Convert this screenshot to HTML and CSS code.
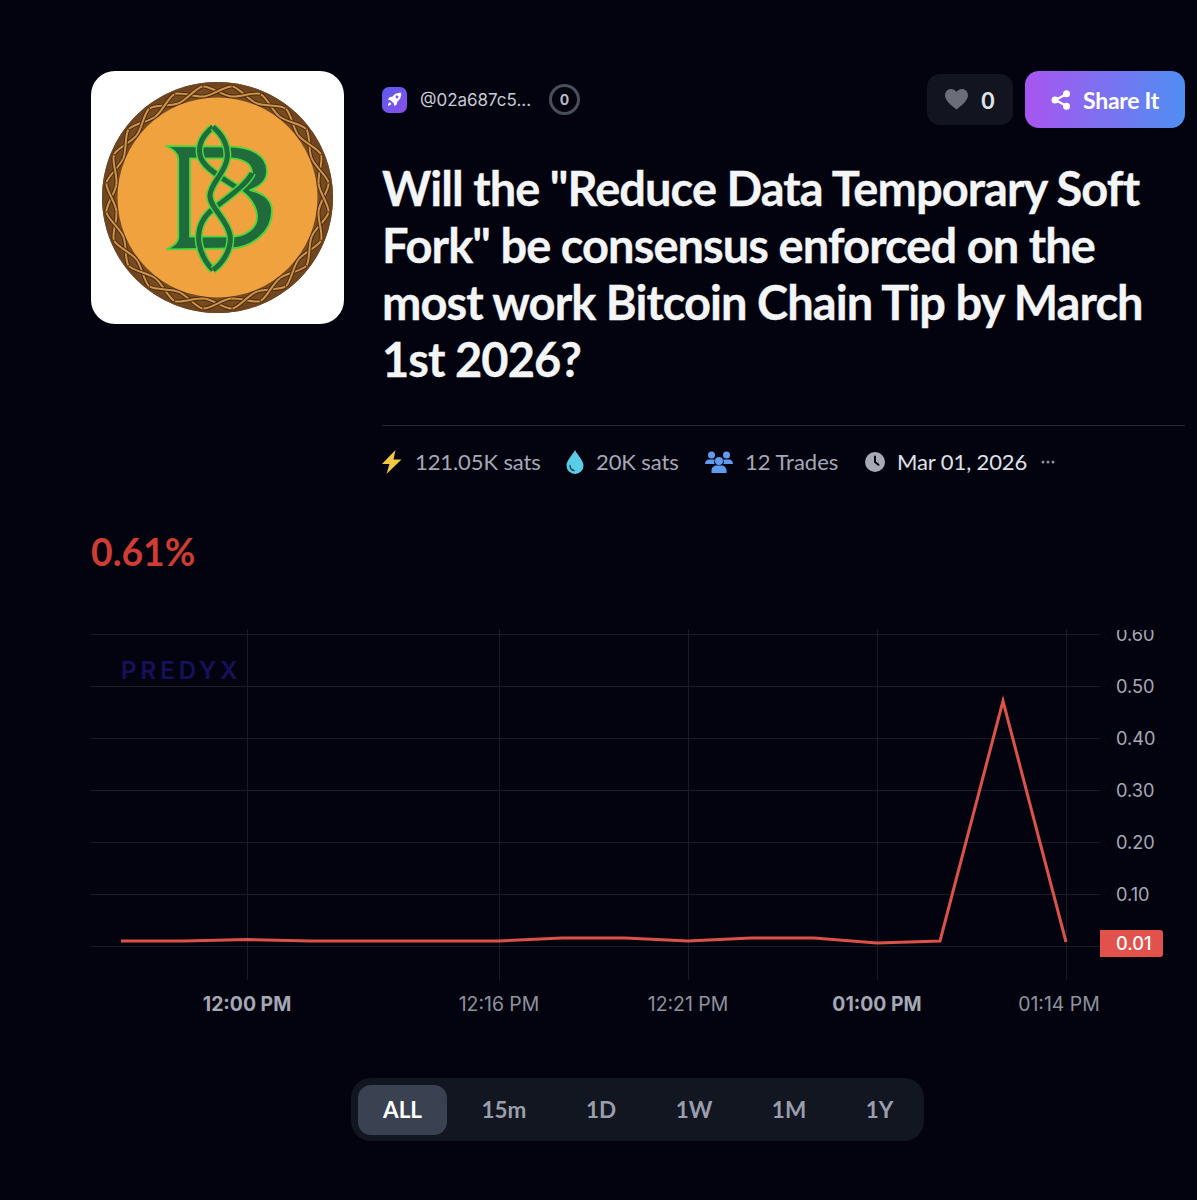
FILE: index.html
```html
<!DOCTYPE html>
<html lang="en">
<head>
<meta charset="utf-8">
<title>Market</title>
<link rel="stylesheet" href="styles.css">
</head>
<body>
<main class="page">
  <section class="header">
    <div class="logo">
      <svg viewBox="0 0 253 253" width="253" height="253">
        <defs>
          <g id="braid">
            <path class="braid-o" d="M112.500 15.400C120 15.400 133 25.400 140.500 25.400"/>
            <path class="braid-i" d="M112.500 15.400C120 15.400 133 25.400 140.500 25.400"/>
            <path class="braid-o" d="M112.500 25.400C120 25.400 133 15.400 140.500 15.400"/>
            <path class="braid-i" d="M112.500 25.400C120 25.400 133 15.400 140.500 15.400"/>
          </g>
        </defs>
        <circle cx="126.500" cy="126.500" r="107" fill="none" stroke="#774a1f" stroke-width="17"/>
        <circle cx="126.500" cy="126.500" r="113" fill="none" stroke="#6e4520" stroke-width="5" stroke-dasharray="13 2" stroke-linecap="round"/>
        <use href="#braid"/>
        <use href="#braid" transform="rotate(15 126.500 126.500)"/>
        <use href="#braid" transform="rotate(30 126.500 126.500)"/>
        <use href="#braid" transform="rotate(45 126.500 126.500)"/>
        <use href="#braid" transform="rotate(60 126.500 126.500)"/>
        <use href="#braid" transform="rotate(75 126.500 126.500)"/>
        <use href="#braid" transform="rotate(90 126.500 126.500)"/>
        <use href="#braid" transform="rotate(105 126.500 126.500)"/>
        <use href="#braid" transform="rotate(120 126.500 126.500)"/>
        <use href="#braid" transform="rotate(135 126.500 126.500)"/>
        <use href="#braid" transform="rotate(150 126.500 126.500)"/>
        <use href="#braid" transform="rotate(165 126.500 126.500)"/>
        <use href="#braid" transform="rotate(180 126.500 126.500)"/>
        <use href="#braid" transform="rotate(195 126.500 126.500)"/>
        <use href="#braid" transform="rotate(210 126.500 126.500)"/>
        <use href="#braid" transform="rotate(225 126.500 126.500)"/>
        <use href="#braid" transform="rotate(240 126.500 126.500)"/>
        <use href="#braid" transform="rotate(255 126.500 126.500)"/>
        <use href="#braid" transform="rotate(270 126.500 126.500)"/>
        <use href="#braid" transform="rotate(285 126.500 126.500)"/>
        <use href="#braid" transform="rotate(300 126.500 126.500)"/>
        <use href="#braid" transform="rotate(315 126.500 126.500)"/>
        <use href="#braid" transform="rotate(330 126.500 126.500)"/>
        <use href="#braid" transform="rotate(345 126.500 126.500)"/>
        <circle cx="126.500" cy="126.500" r="100" fill="#f0a23f"/>
        <path class="b-shape" d="M75 75 L139 75.700 C160 76 176 84 176 100 C176 110 168 116 159 119 C172 122 181 128 181 140 C181 162 160 177 139 177.500 L75.700 178.300 C82 175 87.300 172 87.300 166 L87.300 88 C87.300 82 82 78 75 75 Z M99 87.300 L141 87.300 C155 88 162 95 161 104 C160 110 155 114 149 119 C158 125 166 135 166 146 C166 157 155 165.700 139 165.700 L99 165.700 Z"/>
        <path class="knot-o" d="M122 56 C112 64 107 74 109 84 C111 96 130 106 149 119"/>
        <path class="knot-i" d="M122 56 C112 64 107 74 109 84 C111 96 130 106 149 119"/>
        <path class="knot-o" d="M161 102 C158 110 146 120 122 138 C112 146 106 156 108 172 C110 184 116 193 122 199"/>
        <path class="knot-i" d="M161 102 C158 110 146 120 122 138 C112 146 106 156 108 172 C110 184 116 193 122 199"/>
        <path class="knot-o" d="M122 56 C132 64 138 76 136 88 C134 102 120 112 119 124 C118 136 136 148 139 164 C141 178 132 192 122 199"/>
        <path class="knot-i" d="M122 56 C132 64 138 76 136 88 C134 102 120 112 119 124 C118 136 136 148 139 164 C141 178 132 192 122 199"/>
      </svg>
    </div>
    <div class="info">
      <div class="top-row">
        <div class="creator">
          <span class="avatar">
            <svg viewBox="0 0 24 24" width="17" height="17"><path fill="#fff" d="M21.500 2.500c-5.500-.4-9.700 1.600-12.600 5.600L5.400 8.600 2.500 12l3.900.9 4.700 4.700.9 3.900 3.400-2.900.5-3.500c4-2.900 6-7.100 5.600-12.600zM15.500 6.500a2 2 0 1 1 0 4 2 2 0 0 1 0-4zM5.500 16c-1.500.5-2.500 2-2.700 4.700 2.700-.2 4.200-1.200 4.700-2.700z"/></svg>
          </span>
          <span class="handle">@02a687c5...</span>
          <span class="level">0</span>
        </div>
        <div class="actions">
          <button class="like">
            <svg viewBox="0 0 24 22" width="23" height="21"><path fill="#6b6e78" d="M12 21.500C5 15.800 0 11.600 0 6.500 0 2.800 2.800 0 6.300 0 8.500 0 10.700 1.100 12 3c1.300-1.900 3.500-3 5.700-3C21.200 0 24 2.800 24 6.500c0 5.100-5 9.300-12 15z"/></svg>
            <span>0</span>
          </button>
          <button class="share">
            <svg viewBox="0 0 20 20" width="20" height="20"><path fill="none" stroke="#fff" stroke-width="2.200" d="M15.500 4 4.500 10l11 6"/><circle cx="15.500" cy="3.800" r="3.500" fill="#fff"/><circle cx="15.500" cy="16.200" r="3.500" fill="#fff"/><circle cx="4" cy="10" r="3.500" fill="#fff"/></svg>
            <span>Share It</span>
          </button>
        </div>
      </div>
      <h1 class="title">Will the "Reduce Data Temporary Soft Fork" be consensus enforced on the most work Bitcoin Chain Tip by March 1st 2026?</h1>
      <div class="stats">
        <span class="stat stat-volume">
          <svg viewBox="0 0 20 24" width="20" height="24"><path fill="#f5c842" d="M13.500 0 0 14h7.500L4.500 24 19.500 9.500H11.500z"/></svg>
          <span>121.05K sats</span>
        </span>
        <span class="stat stat-liquidity">
          <svg viewBox="0 0 18 24" width="18" height="24"><path fill="#5ccbe8" d="M9 0C6.500 5 .5 10.500.5 15.500a8.500 8.500 0 0 0 17 0C17.500 10.500 11.500 5 9 0z"/><path fill="none" stroke="#0d3a4a" stroke-width="1.300" stroke-linecap="round" d="M4 15.500c0 2.500 1.800 4.500 4 5"/></svg>
          <span>20K sats</span>
        </span>
        <span class="stat stat-trades">
          <svg viewBox="0 0 28 22" width="28" height="22"><g fill="#5f9bf0"><circle cx="6.500" cy="4" r="3.500"/><circle cx="21.500" cy="4" r="3.500"/><circle cx="14" cy="10" r="4"/><path d="M0 13c0-3 2-4.500 4-4.500h4.500c.5 0 1 .2 1.300.4C9.300 10 9 11 9.500 13zM28 13c0-3-2-4.500-4-4.500h-4.500c-.5 0-1 .2-1.300.4.500 1.100.8 2.100.3 4.100zM6.500 22v-2.500c0-3 2.500-5 5-5h5c2.500 0 5 2 5 5V22z"/></g></svg>
          <span>12 Trades</span>
        </span>
        <span class="stat stat-date">
          <svg viewBox="0 0 20 20" width="20" height="20"><circle cx="10" cy="10" r="10" fill="#a7aab5"/><path fill="none" stroke="#05050f" stroke-width="2" stroke-linecap="round" d="M10 4.500V10l3.500 2.800"/></svg>
          <span class="date">Mar 01, 2026</span>
        </span>
        <svg class="more" viewBox="0 0 14 4" width="14" height="4"><g fill="#8a8d98"><circle cx="2" cy="2" r="1.500"/><circle cx="7" cy="2" r="1.500"/><circle cx="12" cy="2" r="1.500"/></g></svg>
      </div>
    </div>
  </section>

  <p class="percent">0.61%</p>

  <section class="chart">
    <svg viewBox="0 0 1094 396" width="1094" height="396">
      <defs>
        <clipPath id="y-clip"><rect x="1010" y="11" width="84" height="290"/></clipPath>
      </defs>
      <g class="grid">
        <path d="M0 15.500H1009M0 67.500H1009M0 119.500H1009M0 171.500H1009M0 223.500H1009M0 275.500H1009M0 327.500H1009"/>
        <path d="M156.500 10V361M408.500 10V361M597.500 10V361M786.500 10V361M975.500 10V361"/>
      </g>
      <text class="mark" x="30" y="60">PREDYX</text>
      <g class="y-axis" clip-path="url(#y-clip)">
        <text x="1025" y="21.500">0.60</text>
        <text x="1025" y="73.500">0.50</text>
        <text x="1025" y="125.500">0.40</text>
        <text x="1025" y="177.500">0.30</text>
        <text x="1025" y="229.500">0.20</text>
        <text x="1025" y="281.500">0.10</text>
      </g>
      <polyline class="line" points="30,322 93,322 156,320.500 219,322 282,322 345,322 408,322 471,319 534,319 597,322 660,319 723,319 786,324 849,322 912,82 975,323"/>
      <path class="badge" d="M1009 311H1069a3 3 0 0 1 3 3V335a3 3 0 0 1-3 3H1009Z"/>
      <text class="badge-text" x="1025" y="330.500">0.01</text>
      <g class="x-axis">
        <text class="strong" x="156" y="392" text-anchor="middle">12:00 PM</text>
        <text x="408" y="392" text-anchor="middle">12:16 PM</text>
        <text x="597" y="392" text-anchor="middle">12:21 PM</text>
        <text class="strong" x="786" y="392" text-anchor="middle">01:00 PM</text>
        <text x="968" y="392" text-anchor="middle">01:14 PM</text>
      </g>
    </svg>
  </section>

  <nav class="tabs">
    <a class="tab tab-active">ALL</a>
    <a class="tab">15m</a>
    <a class="tab">1D</a>
    <a class="tab">1W</a>
    <a class="tab">1M</a>
    <a class="tab">1Y</a>
  </nav>
</main>
</body>
</html>
```
FILE: styles.css
```css
* { box-sizing: border-box; }
html, body { margin: 0; padding: 0; }
body {
  background: #03030f;
  color: #fff;
  font-family: "Lato", "Liberation Sans", sans-serif;
  height: 1200px;
  overflow: hidden;
}
.page { padding: 71px 12px 0 91px; }
.header { display: flex; gap: 38px; align-items: flex-start; }
.logo {
  flex: 0 0 253px;
  width: 253px;
  height: 253px;
  background: #fff;
  border-radius: 24px;
  overflow: hidden;
}
.logo svg { display: block; filter: blur(0.4px); }
.braid-o { fill: none; stroke: #4a2c12; stroke-width: 4; }
.braid-i { fill: none; stroke: #cf9444; stroke-width: 2; }
.b-shape { fill: #1f6b3c; fill-rule: evenodd; stroke: #4bd63f; stroke-width: 1.800; stroke-linejoin: round; }
.knot-o { fill: none; stroke: #4bd63f; stroke-width: 8; stroke-linejoin: round; }
.knot-i { fill: none; stroke: #1f6b3c; stroke-width: 5; stroke-linejoin: round; }
.info { flex: 1; min-width: 0; }
.top-row { display: flex; justify-content: space-between; align-items: center; height: 57px; }
.creator { display: flex; align-items: center; }
.avatar {
  width: 25px;
  height: 26px;
  border-radius: 7px;
  background: linear-gradient(135deg, #5a5cf0, #8b4fe8);
  display: flex;
  align-items: center;
  justify-content: center;
}
.handle { font-family: "Inter", sans-serif; font-size: 17px; color: #c8cbd5; margin-left: 13px; width: 125px; }
.level {
  width: 31px;
  height: 31px;
  border: 3px solid #4a4e5b;
  border-radius: 50%;
  display: flex;
  align-items: center;
  justify-content: center;
  font-family: "Inter", sans-serif;
  font-weight: 700;
  font-size: 14px;
  color: #b6b9c4;
  margin-left: 4px;
}
.actions { display: flex; gap: 12px; align-items: center; }
button { border: 0; font-family: inherit; display: flex; align-items: center; color: #fff; padding: 0; }
.like {
  width: 86px;
  height: 51px;
  background: #12151f;
  border-radius: 13px;
  justify-content: center;
  gap: 13px;
  font-size: 23px;
  font-weight: 700;
  color: #e0e3ea;
}
.share {
  width: 160px;
  height: 57px;
  border-radius: 14px;
  background: linear-gradient(90deg, #a855f0, #4f8ef2);
  justify-content: center;
  gap: 12px;
  font-size: 23px;
  font-weight: 700;
  letter-spacing: -0.3px;
}
.title {
  margin: 32px 0 0;
  font-size: 47px;
  line-height: 57px;
  font-weight: 700;
  letter-spacing: -0.95px;
  color: #f4f5f7;
  -webkit-text-stroke: 0.3px #f4f5f7;
  padding-bottom: 37px;
  border-bottom: 1px solid #23252f;
}
.stats { display: flex; align-items: center; height: 71px; font-size: 22px; letter-spacing: -0.1px; color: #a5a8b4; }
.stat { display: flex; align-items: center; }
.stat-volume { gap: 13px; width: 184px; }
.stat-liquidity { gap: 12px; width: 139px; }
.stat-trades { gap: 12px; width: 160px; letter-spacing: 0; }
.stat-date { gap: 12px; width: 176px; }
.date { color: #dfe1e8; }
.more { display: block; }
.percent {
  margin: 32px 0 0;
  font-size: 37.300px;
  line-height: 46px;
  font-weight: 700;
  color: #cf3c33;
}
.chart { margin-top: 44px; }
.chart svg { display: block; }
.grid path { stroke: #1a1b27; stroke-width: 1; fill: none; }
.mark { font-family: "Inter", sans-serif; font-size: 24px; font-weight: 600; letter-spacing: 4px; fill: #17115c; }
.y-axis text { font-family: "Inter", sans-serif; font-size: 18.200px; fill: #a5a8b4; }
.x-axis text { font-family: "Inter", sans-serif; font-size: 19.400px; fill: #8f929e; }
.x-axis .strong { font-weight: 700; fill: #a5a8b4; }
.line { fill: none; stroke: #dc5249; stroke-width: 3; stroke-linejoin: miter; }
.badge { fill: #e0524b; }
.badge-text { font-family: "Inter", sans-serif; font-size: 18.200px; fill: #fff; font-weight: 500; }
.tabs {
  width: 573px;
  height: 63px;
  margin-left: 260px;
  margin-top: 63px;
  background: #111621;
  border-radius: 20px;
  display: flex;
  align-items: center;
  gap: 9.500px;
  padding: 0 7px;
  font-size: 22.500px;
  font-weight: 700;
}
.tab { color: #9a9eac; display: flex; align-items: center; justify-content: center; height: 50px; padding: 0 25px; }
.tab-active { background: #3a4150; color: #fff; border-radius: 13px; }
```
